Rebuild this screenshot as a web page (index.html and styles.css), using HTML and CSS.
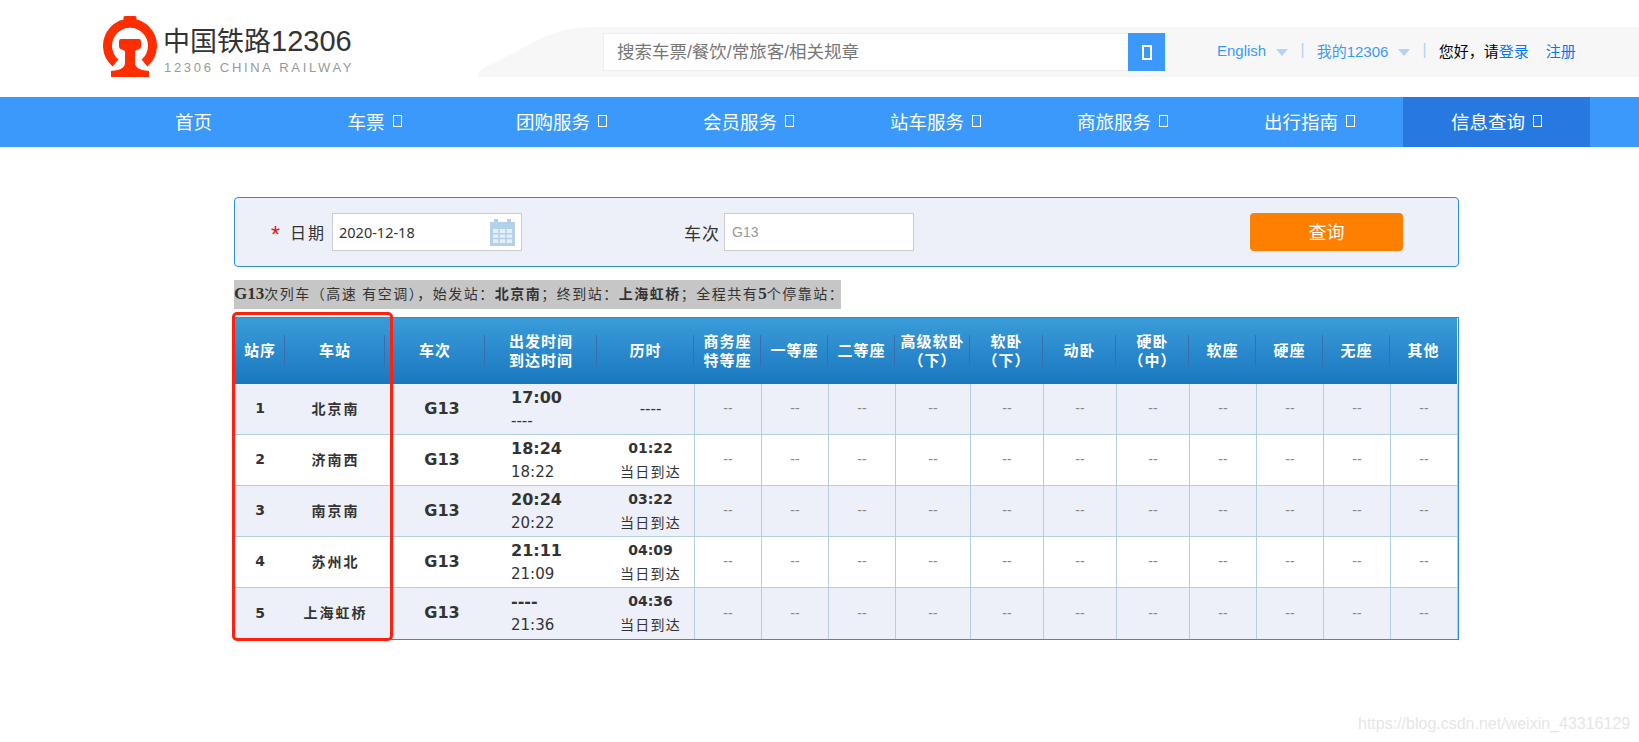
FILE: index.html
```html
<!DOCTYPE html>
<html lang="zh-CN">
<head>
<meta charset="utf-8">
<title>车次查询</title>
<link rel="stylesheet" href="styles.css">
</head>
<body>
<header class="top">
  <svg class="train" viewBox="0 0 1161 50" preserveAspectRatio="none" aria-hidden="true"><path d="M0 50 Q-1 43 12 38 L68 9 Q92 0 112 0 L1161 0 L1161 50 Z" fill="#f7f7f7"/></svg>
  <a class="logo">
    <svg class="logo-mark" viewBox="0 0 54 61" aria-hidden="true">
      <path d="M12.5 47 A22.5 22.5 0 1 1 41.5 47" fill="none" stroke="#ff2d00" stroke-width="9"/>
      <rect x="20.5" y="0" width="13" height="8" rx="1.5" fill="#ff2d00"/>
      <path d="M18 23 H36 Q38 23 38 25 V30 Q38 33 35 33.5 L32 35 V47 Q32 52 39 54 L46 55 V61 H8 V55 L15 54 Q22 52 22 47 V35 L19 33.5 Q16 33 16 30 V25 Q16 23 18 23 Z" fill="#ff2d00"/>
    </svg>
    <span class="logo-text">
      <span class="logo-cn">中国铁路<span class="logo-num">12306</span></span>
      <span class="logo-en">12306 CHINA RAILWAY</span>
    </span>
  </a>
  <div class="search">
    <div class="search-box">搜索车票/餐饮/常旅客/相关规章</div>
    <button class="search-btn" aria-label="搜索"><i class="tofu tofu-lg"></i></button>
  </div>
  <nav class="links">
    <a class="link">English</a><i class="caret"></i>
    <span class="pipe">|</span>
    <a class="link">我的12306</a><i class="caret"></i>
    <span class="pipe">|</span>
    <span class="hello">您好，请</span><a class="link-strong">登录</a>
    <a class="link-strong reg">注册</a>
  </nav>
</header>

<nav class="menu">
  <a class="menu-item home">首页</a>
  <a class="menu-item">车票<i class="tofu"></i></a>
  <a class="menu-item">团购服务<i class="tofu"></i></a>
  <a class="menu-item">会员服务<i class="tofu"></i></a>
  <a class="menu-item">站车服务<i class="tofu"></i></a>
  <a class="menu-item">商旅服务<i class="tofu"></i></a>
  <a class="menu-item">出行指南<i class="tofu"></i></a>
  <a class="menu-item active">信息查询<i class="tofu"></i></a>
</nav>

<main class="main">
  <form class="panel">
    <span class="star">*</span>
    <label class="label">日期</label>
    <div class="field date">2020-12-18
      <svg class="cal" viewBox="0 0 25 27" aria-hidden="true">
        <path d="M0 3 H4 V0 H8 V3 H17 V0 H21 V3 H25 V27 H0 Z" fill="#b3d2ea"/>
        <path d="M3 10 H22 V24 H3 Z" fill="#e4eff8"/>
        <path d="M9 10 V24 M16 10 V24 M3 14.7 H22 M3 19.4 H22" stroke="#b3d2ea" stroke-width="1.5"/>
      </svg>
    </div>
    <label class="label label-train">车次</label>
    <div class="field train-no">G13</div>
    <button class="query" type="button">查询</button>
  </form>

  <p class="info"><b class="info-b">G13</b>次列车（高速 有空调），始发站：<b>北京南</b>；终到站：<b>上海虹桥</b>；全程共有<b class="info-b">5</b>个停靠站：</p>

  <table class="grid">
    <colgroup>
      <col class="w50"><col class="w100"><col class="w100"><col class="w112"><col class="w97">
      <col class="w67"><col class="w67"><col class="w67"><col class="w75"><col class="w73"><col class="w73"><col class="w73">
      <col class="w67"><col class="w67"><col class="w67"><col class="w68">
    </colgroup>
    <thead>
      <tr>
        <th>站序</th><th>车站</th><th>车次</th><th>出发时间<br>到达时间</th><th>历时</th>
        <th>商务座<br>特等座</th><th>一等座</th><th>二等座</th><th>高级软卧<br>（下）</th><th>软卧<br>（下）</th><th>动卧</th><th>硬卧<br>（中）</th>
        <th>软座</th><th>硬座</th><th>无座</th><th>其他</th>
      </tr>
    </thead>
    <tbody>
      <tr>
        <td class="idx">1</td><td class="station">北京南</td><td class="code">G13</td>
        <td class="time"><b>17:00</b><br><span class="none">----</span></td>
        <td class="dur"><span class="none">----</span></td>
        <td class="seat">--</td><td class="seat">--</td><td class="seat">--</td><td class="seat">--</td><td class="seat">--</td><td class="seat">--</td><td class="seat">--</td><td class="seat">--</td><td class="seat">--</td><td class="seat">--</td><td class="seat">--</td>
      </tr>
      <tr>
        <td class="idx">2</td><td class="station">济南西</td><td class="code">G13</td>
        <td class="time"><b>18:24</b><br>18:22</td>
        <td class="dur"><b>01:22</b><br><span class="same">当日到达</span></td>
        <td class="seat">--</td><td class="seat">--</td><td class="seat">--</td><td class="seat">--</td><td class="seat">--</td><td class="seat">--</td><td class="seat">--</td><td class="seat">--</td><td class="seat">--</td><td class="seat">--</td><td class="seat">--</td>
      </tr>
      <tr>
        <td class="idx">3</td><td class="station">南京南</td><td class="code">G13</td>
        <td class="time"><b>20:24</b><br>20:22</td>
        <td class="dur"><b>03:22</b><br><span class="same">当日到达</span></td>
        <td class="seat">--</td><td class="seat">--</td><td class="seat">--</td><td class="seat">--</td><td class="seat">--</td><td class="seat">--</td><td class="seat">--</td><td class="seat">--</td><td class="seat">--</td><td class="seat">--</td><td class="seat">--</td>
      </tr>
      <tr>
        <td class="idx">4</td><td class="station">苏州北</td><td class="code">G13</td>
        <td class="time"><b>21:11</b><br>21:09</td>
        <td class="dur"><b>04:09</b><br><span class="same">当日到达</span></td>
        <td class="seat">--</td><td class="seat">--</td><td class="seat">--</td><td class="seat">--</td><td class="seat">--</td><td class="seat">--</td><td class="seat">--</td><td class="seat">--</td><td class="seat">--</td><td class="seat">--</td><td class="seat">--</td>
      </tr>
      <tr>
        <td class="idx">5</td><td class="station">上海虹桥</td><td class="code">G13</td>
        <td class="time"><b>----</b><br>21:36</td>
        <td class="dur"><b>04:36</b><br><span class="same">当日到达</span></td>
        <td class="seat">--</td><td class="seat">--</td><td class="seat">--</td><td class="seat">--</td><td class="seat">--</td><td class="seat">--</td><td class="seat">--</td><td class="seat">--</td><td class="seat">--</td><td class="seat">--</td><td class="seat">--</td>
      </tr>
    </tbody>
  </table>
</main>

<div class="highlight" aria-hidden="true"></div>
<div class="watermark">https://blog.csdn.net/weixin_43316129</div>
</body>
</html>
```
FILE: styles.css
```css
* { box-sizing: border-box; }
html, body { margin: 0; padding: 0; }
body {
  position: relative;
  height: 742px;
  overflow: hidden;
  background: #fff;
  color: #333;
  font-family: "Liberation Sans", "Noto Sans CJK SC", sans-serif;
}

/* top bar */
.top {
  position: relative;
  display: flex;
  align-items: flex-start;
  height: 97px;
  padding-left: 103px;
}
.train {
  position: absolute;
  left: 478px;
  top: 27px;
  width: 1161px;
  height: 50px;
}
.logo {
  position: relative;
  display: flex;
  gap: 7px;
  margin-top: 16px;
  width: 250px;
}
.logo-mark { width: 54px; height: 61px; flex: none; }
.logo-text { display: flex; flex-direction: column; }
.logo-cn {
  font-size: 27px;
  line-height: 36px;
  margin-top: 7px;
  margin-left: -1px;
  color: #333;
  white-space: nowrap;
}
.logo-num { font-size: 29px; }
.logo-en {
  font-size: 13px;
  line-height: 16px;
  margin-top: 0;
  letter-spacing: 2.68px;
  color: #999;
  white-space: nowrap;
}
.search {
  position: relative;
  display: flex;
  margin-top: 33px;
  margin-left: 250px;
  height: 38px;
}
.search-box {
  width: 525px;
  height: 38px;
  padding-left: 13px;
  background: #fff;
  border: 1px solid #eee;
  border-right: 0;
  color: #777;
  font-size: 17.5px;
  line-height: 36px;
}
.search-btn {
  display: flex;
  align-items: center;
  justify-content: center;
  width: 37px;
  height: 38px;
  padding: 0;
  border: 0;
  background: #3b99fc;
}
.links {
  position: relative;
  display: flex;
  align-items: center;
  margin-top: 31px;
  margin-left: 52px;
  height: 38px;
  font-size: 15px;
  white-space: nowrap;
}
.link { color: #3b99fc; }
.link-strong { color: #0077ff; }
.hello { color: #000; }
.reg { margin-left: 17px; }
.caret {
  width: 0;
  height: 0;
  margin: 4px 0 0 10px;
  border-left: 6.5px solid transparent;
  border-right: 6.5px solid transparent;
  border-top: 7px solid #b3d4f7;
}
.pipe { margin: 0 12px; color: #b3d4f7; font-size: 17px; }

/* missing-glyph boxes */
.tofu {
  display: inline-block;
  width: 9px;
  height: 12px;
  margin-left: 8px;
  border: 1.5px solid #fff;
}
.tofu-lg {
  width: 10px;
  height: 15px;
  margin-left: 0;
  border-width: 2px;
}

/* menu */
.menu {
  display: flex;
  height: 50px;
  padding-left: 94px;
  background: #3b99fc;
}
.menu-item {
  display: flex;
  align-items: center;
  justify-content: center;
  width: 187px;
  padding-bottom: 3px;
  color: #fff;
  font-size: 18.5px;
}
.home { padding-left: 12px; }
.active { background: #2878e2; }

/* main */
.main {
  width: 1225px;
  margin-left: 234px;
  padding-top: 50px;
}
.panel {
  display: flex;
  align-items: center;
  height: 70px;
  padding-left: 36px;
  background: #edf0f8;
  border: 1px solid #2e8fd0;
  border-radius: 4px;
}
.star {
  width: 19px;
  color: #f01010;
  font-size: 23px;
  line-height: 20px;
  padding-top: 6px;
}
.label {
  width: 42px;
  font-size: 16px;
  letter-spacing: 2px;
  color: #333;
}
.label-train { width: 40px; margin-left: 162px; font-size: 17px; letter-spacing: 1px; }
.field {
  position: relative;
  display: flex;
  align-items: center;
  width: 190px;
  height: 38px;
  padding-left: 6px;
  background: #fff;
  border: 1px solid #ccc;
  font-family: "Noto Sans", sans-serif;
  font-size: 14.5px;
}
.train-no { color: #999; font-size: 14px; padding-left: 7px; font-family: "Liberation Sans", sans-serif; }
.cal { position: absolute; right: 6px; top: 5px; width: 25px; height: 27px; }
.query {
  width: 153px;
  height: 38px;
  margin-left: 336px;
  padding: 0 0 2px;
  border: 0;
  border-radius: 4px;
  background: #ff8000;
  color: #fff;
  font-family: inherit;
  font-size: 18px;
}
.info {
  display: inline-block;
  width: 607px;
  margin: 13px 0 8px;
  height: 29px;
  background: #c6c6c6;
  vertical-align: top;
  font-family: "Liberation Serif", "Noto Sans CJK SC", serif;
  font-size: 14px;
  line-height: 27px;
  letter-spacing: 1.5px;
  white-space: nowrap;
}
.info-b { font-size: 17px; letter-spacing: 0; }

/* table */
.grid {
  display: table;
  width: 1225px;
  table-layout: fixed;
  border-collapse: separate;
  border-spacing: 0;
  border: 1px solid #2e8fd0;
  font-family: "Noto Sans CJK SC", sans-serif;
}
.w50 { width: 50px; }
.w100 { width: 100px; }
.w112 { width: 112px; }
.w97 { width: 97px; }
.w67 { width: 67px; }
.w68 { width: 68px; }
.w75 { width: 75px; }
.w73 { width: 73px; }
.grid th {
  position: relative;
  height: 66px;
  padding: 0 0 3px;
  background: linear-gradient(#3a9cd9, #1a77bf);
  color: #fff;
  font-size: 15px;
  font-weight: 700;
  line-height: 19px;
  letter-spacing: 1px;
}
.grid th:not(:last-child)::after {
  content: "";
  position: absolute;
  right: 0;
  top: 17px;
  height: 31px;
  width: 1px;
  background: #3a6cae;
}
.grid th:last-child { border-right: 1px solid #e8f2fa; }
.grid tbody tr { height: 51px; }
.grid tbody tr:nth-child(odd) td { background: #edf0f8; }
.grid td {
  padding: 0 0 2px;
  text-align: center;
  border-bottom: 1px solid #b0cfe0;
  font-size: 14px;
  color: #333;
}
.grid tbody tr:last-child td { border-bottom: 0; }
.idx { font-family: "DejaVu Sans", sans-serif; font-weight: 700; }
.grid td.idx { font-size: 14px; }
.grid td.station { padding: 0 0 3px 1px; font-weight: 700; letter-spacing: 2px; }
.grid td.code { padding-left: 14px; font-family: "DejaVu Sans", sans-serif; font-size: 16px; font-weight: 700; }
.grid td.time {
  padding: 0 0 0 26px;
  text-align: left;
  font-family: "DejaVu Sans", sans-serif;
  font-size: 15px;
  line-height: 23px;
}
.time b { font-size: 16px; }
.grid td.dur {
  padding: 0 0 0 10px;
  font-family: "DejaVu Sans", sans-serif;
  font-size: 13px;
  line-height: 23px;
}
.dur b { font-size: 14px; }
.same { font-family: "Noto Sans CJK SC", sans-serif; font-size: 14px; letter-spacing: 1.3px; }
.none { font-size: 15px; }
.grid td.seat {
  border-left: 1px solid #b0cfe0;
  color: #888;
  font-size: 14px;
  font-family: "Liberation Sans", sans-serif;
}
.grid td.seat:last-child { border-right: 1px solid #b0cfe0; }

/* annotation overlays */
.highlight {
  position: absolute;
  left: 232px;
  top: 312px;
  width: 161px;
  height: 329px;
  border: 3px solid #ff2010;
  border-radius: 5px;
}
.watermark {
  position: absolute;
  left: 1358px;
  top: 715px;
  color: #e6e6e6;
  font-size: 16px;
  line-height: 18px;
  white-space: nowrap;
}
```
